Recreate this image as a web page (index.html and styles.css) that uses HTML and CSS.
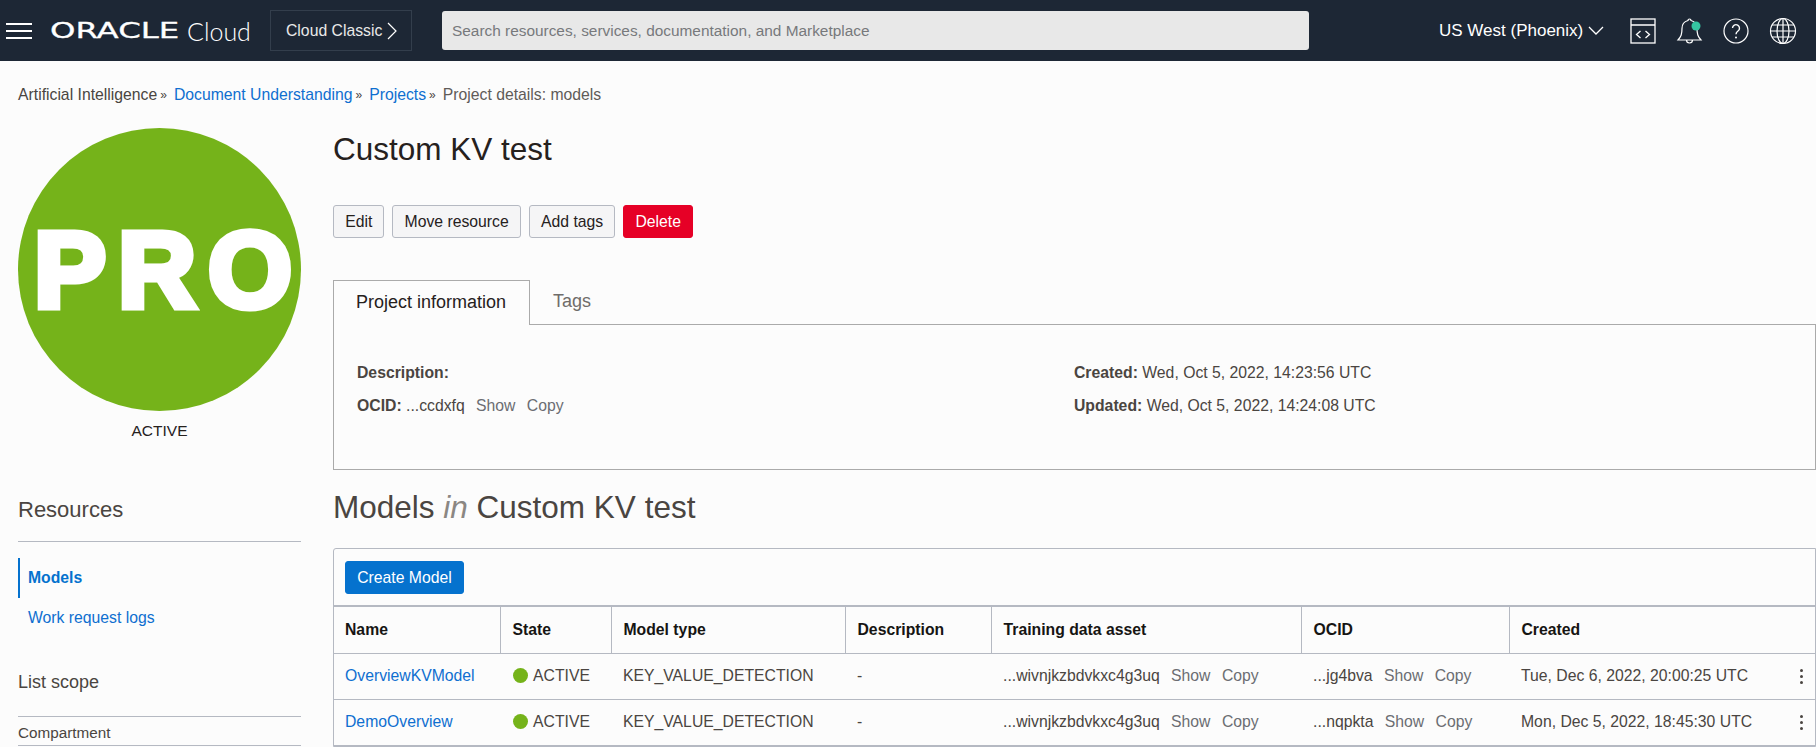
FILE: index.html
```html
<!DOCTYPE html>
<html lang="en">
<head>
    <meta charset="UTF-8">
    <meta name="viewport" content="width=device-width, initial-scale=1.0">
    <title>Project details: models</title>
    <link rel="stylesheet" href="styles.css">
</head>
<body>
    <header class="topbar">
        <svg class="hamburger" width="26" height="16" viewBox="0 0 26 16"><path d="M0 1h26M0 8h26M0 15h26" stroke="#fff" stroke-width="2"/></svg>
        <div class="logo"><span class="logo-oracle">ORACLE</span><span class="logo-cloud">Cloud</span></div>
        <div class="classic">Cloud Classic
            <svg width="10" height="18" viewBox="0 0 10 18"><path d="M1 1l8 8-8 8" fill="none" stroke="#fff" stroke-width="1.2"/></svg>
        </div>
        <div class="search">Search resources, services, documentation, and Marketplace</div>
        <div class="region">US West (Phoenix)
            <svg width="16" height="9" viewBox="0 0 16 9"><path d="M1 1l7 7 7-7" fill="none" stroke="#fff" stroke-width="1.3"/></svg>
        </div>
        <svg class="tool tool-code" width="26" height="26" viewBox="0 0 26 26"><g fill="none" stroke="#fff" stroke-width="1.3"><rect x="1" y="1" width="24" height="24"/><path d="M1 7h24M10.5 13l-4 3.5 4 3.5M15.5 13l4 3.5-4 3.5"/></g></svg>
        <svg class="tool tool-bell" width="28" height="28" viewBox="0 0 28 28"><path d="M12 3.5a1.5 1.5 0 0 1 3 0c4 1 6 4 6 8 0 6 1 8 4 11.5H2c3-3.5 4-5.5 4-11.5 0-4 2-7 6-8zM10.5 23a3 3 0 0 0 6 0" fill="none" stroke="#fff" stroke-width="1.2"/><circle cx="20" cy="9" r="4.5" fill="#35c4a1"/></svg>
        <svg class="tool tool-help" width="26" height="26" viewBox="0 0 26 26"><circle cx="13" cy="13" r="12" fill="none" stroke="#fff" stroke-width="1.2"/><path d="M9.5 10a3.5 3.5 0 1 1 5.5 3c-1.3.9-2 1.6-2 3.2" fill="none" stroke="#fff" stroke-width="1.4"/><circle cx="13" cy="19.5" r="1" fill="#fff"/></svg>
        <svg class="tool tool-globe" width="28" height="28" viewBox="0 0 28 28"><g fill="none" stroke="#fff" stroke-width="1.2"><circle cx="14" cy="14" r="12.5"/><ellipse cx="14" cy="14" rx="6" ry="12.5"/><path d="M14 1.5v25M3 8h22M1.5 14h25M3 20h22"/></g></svg>
    </header>

    <nav class="breadcrumb">
        <span>Artificial Intelligence</span><span class="sep">&raquo;</span>
        <a href="#">Document Understanding</a><span class="sep">&raquo;</span>
        <a href="#">Projects</a><span class="sep">&raquo;</span>
        <span class="current">Project details: models</span>
    </nav>

    <div class="page">
        <aside class="sidebar">
            <div class="badge">PRO</div>
            <div class="badge-state">ACTIVE</div>

            <h3 class="side-title">Resources</h3>
            <ul class="side-nav">
                <li class="selected"><a href="#">Models</a></li>
                <li><a href="#">Work request logs</a></li>
            </ul>

            <h3 class="side-title scope">List scope</h3>
            <div class="scope-label">Compartment</div>
        </aside>

        <main class="content">
            <h1>Custom KV test</h1>
            <div class="actions">
                <button class="btn">Edit</button>
                <button class="btn">Move resource</button>
                <button class="btn">Add tags</button>
                <button class="btn btn-danger">Delete</button>
            </div>

            <div class="tabs">
                <div class="tab active">Project information</div>
                <div class="tab">Tags</div>
            </div>
            <section class="info-panel">
                <div class="info-col">
                    <p><b>Description:</b></p>
                    <p><b>OCID:</b> ...ccdxfq <a class="mini" href="#">Show</a> <a class="mini" href="#">Copy</a></p>
                </div>
                <div class="info-col">
                    <p><b>Created:</b> Wed, Oct 5, 2022, 14:23:56 UTC</p>
                    <p><b>Updated:</b> Wed, Oct 5, 2022, 14:24:08 UTC</p>
                </div>
            </section>

            <h2>Models <i>in</i> Custom KV test</h2>

            <div class="table-box">
                <div class="toolbar"><button class="btn btn-primary">Create Model</button></div>
                <table>
                    <colgroup>
                        <col class="c-name"><col class="c-state"><col class="c-type"><col class="c-desc"><col class="c-asset"><col class="c-ocid"><col>
                    </colgroup>
                    <thead>
                        <tr><th>Name</th><th>State</th><th>Model type</th><th>Description</th><th>Training data asset</th><th>OCID</th><th>Created</th></tr>
                    </thead>
                    <tbody>
                        <tr>
                            <td><a href="#">OverviewKVModel</a></td>
                            <td><span class="dot"></span>ACTIVE</td>
                            <td>KEY_VALUE_DETECTION</td>
                            <td>-</td>
                            <td>...wivnjkzbdvkxc4g3uq <a class="mini" href="#">Show</a> <a class="mini" href="#">Copy</a></td>
                            <td>...jg4bva <a class="mini" href="#">Show</a> <a class="mini" href="#">Copy</a></td>
                            <td class="created">Tue, Dec 6, 2022, 20:00:25 UTC<span class="kebab"><i></i><i></i><i></i></span></td>
                        </tr>
                        <tr>
                            <td><a href="#">DemoOverview</a></td>
                            <td><span class="dot"></span>ACTIVE</td>
                            <td>KEY_VALUE_DETECTION</td>
                            <td>-</td>
                            <td>...wivnjkzbdvkxc4g3uq <a class="mini" href="#">Show</a> <a class="mini" href="#">Copy</a></td>
                            <td>...nqpkta <a class="mini" href="#">Show</a> <a class="mini" href="#">Copy</a></td>
                            <td class="created">Mon, Dec 5, 2022, 18:45:30 UTC<span class="kebab"><i></i><i></i><i></i></span></td>
                        </tr>
                    </tbody>
                </table>
            </div>
        </main>
    </div>
</body>
</html>
```

FILE: styles.css
```css
* {
    box-sizing: border-box;
}
html, body {
    height: 747px;
    overflow: hidden;
}
body {
    margin: 0;
    background: #fcfcfc;
    color: #4a4541;
    font-family: "Liberation Sans", Arial, sans-serif;
    font-size: 15.75px;
}
a {
    color: #0f6fd0;
    text-decoration: none;
}

/* top bar */
.topbar {
    display: flex;
    align-items: center;
    height: 61px;
    padding-left: 6px;
    background: #1d2735;
    color: #fff;
}
.hamburger {
    flex: none;
}
.logo {
    display: flex;
    align-items: center;
    width: 220px;
    margin-left: 18px;
}
.logo-oracle {
    width: 137px;
    font-family: "DejaVu Sans", sans-serif;
    font-size: 22px;
    transform: scaleX(1.47);
    transform-origin: left center;
    -webkit-text-stroke: 0.3px #fff;
}
.logo-cloud {
    font-family: Lato, sans-serif;
    font-size: 25px;
    font-weight: 300;
}
.classic {
    display: flex;
    align-items: center;
    gap: 5px;
    height: 41px;
    width: 142px;
    padding-left: 15px;
    border: 1px solid #333e4c;
    color: #e9e9e9;
    font-size: 15.75px;
}
.search {
    width: 867px;
    height: 39px;
    margin-left: 30px;
    padding-left: 10px;
    border-radius: 3px;
    background: #e8e8e8;
    color: #77797c;
    font-size: 15.4px;
    line-height: 39px;
}
.region {
    display: flex;
    align-items: center;
    gap: 5px;
    margin-left: 130px;
    font-size: 17px;
}
.tool {
    flex: none;
}
.tool-code {
    margin-left: 26px;
}
.tool-bell {
    margin-left: 20px;
}
.tool-help {
    margin-left: 19px;
}
.tool-globe {
    margin-left: 20px;
}

/* breadcrumb */
.breadcrumb {
    display: flex;
    align-items: center;
    height: 41px;
    margin-top: 13px;
    padding-left: 18px;
}
.sep {
    margin: 0 7px 0 3px;
    font-size: 12px;
}
.current {
    color: #5f5b58;
}

/* page columns */
.page {
    display: grid;
    grid-template-columns: 283px 1fr;
    column-gap: 32px;
    padding-left: 18px;
}

/* left column */
.sidebar {
    padding-top: 13px;
}
.badge {
    width: 283px;
    height: 283px;
    padding-left: 16px;
    border-radius: 50%;
    background: #75b31a;
    color: #fff;
    font-size: 108px;
    font-weight: 700;
    letter-spacing: 12px;
    line-height: 283px;
    text-align: center;
    -webkit-text-stroke: 7px #fff;
}
.badge-state {
    margin-top: 11px;
    color: #26211d;
    font-size: 15.5px;
    line-height: 18px;
    text-align: center;
}
.side-title {
    margin: 0;
    font-size: 22px;
    font-weight: 400;
    line-height: 24px;
}
.sidebar > .side-title:first-of-type {
    margin-top: 58px;
    padding-bottom: 19px;
    border-bottom: 1px solid #b5b9c2;
}
.side-nav {
    margin: 16px 0 0;
    padding: 0;
    list-style: none;
}
.side-nav li {
    height: 40px;
    padding-left: 10px;
    line-height: 40px;
}
.side-nav .selected {
    border-left: 2px solid #0572ce;
    padding-left: 8px;
    font-weight: 700;
}
.side-nav .selected a {
    color: #0572ce;
}
.sidebar > .side-title.scope {
    margin-top: 32px;
    padding-bottom: 0;
    border-bottom: 0;
    font-size: 18px;
}
.scope-label {
    margin-top: 22px;
    padding-top: 7px;
    height: 30px;
    border-top: 1px solid #b5b9c2;
    border-bottom: 1px solid #b5b9c2;
    font-size: 15.25px;
}

/* right column */
.content {
    min-width: 0;
}
h1 {
    margin: 0;
    padding-top: 14px;
    color: #26211d;
    font-size: 31.5px;
    font-weight: 400;
    line-height: 40px;
}
.actions {
    display: flex;
    gap: 8px;
    margin-top: 36px;
}
.btn {
    height: 33px;
    padding: 0 11.15px;
    border: 1px solid #b5b9c2;
    border-radius: 3px;
    background: #f5f5f6;
    color: #26211d;
    font-family: inherit;
    font-size: 15.75px;
}
.btn-danger {
    border-color: #e60026;
    background: #e60026;
    color: #fff;
}
.btn-primary {
    border-color: #0572ce;
    background: #0572ce;
    color: #fff;
}
.tabs {
    display: flex;
    margin-top: 42px;
}
.tab {
    height: 45px;
    padding: 0 23px;
    color: #6f6c6a;
    font-size: 18px;
    line-height: 42px;
    border-bottom: 1px solid #aaa;
}
.tab:last-child {
    flex: 1;
}
.tab.active {
    border: 1px solid #aaa;
    border-bottom: 0;
    padding: 0 22px;
    width: 197px;
    color: #26211d;
}
.info-panel {
    display: grid;
    grid-template-columns: 717px 1fr;
    height: 145px;
    padding: 31px 23px 0;
    border: 1px solid #aaa;
    border-top: 0;
}
.info-panel p {
    margin: 0;
    line-height: 33px;
}
.mini {
    margin-left: 7px;
    color: #6b6d72;
}
h2 {
    margin: 17px 0 0;
    color: #4a4541;
    font-size: 31.5px;
    font-weight: 400;
    line-height: 40px;
}
h2 i {
    color: #8b8783;
}
.table-box {
    margin-top: 21px;
    border: 1px solid #b5b9c2;
    border-radius: 3px 0 0 0;
}
.toolbar {
    height: 58px;
    padding: 12px 11px;
    border-bottom: 2px solid #b5b9c2;
}
table {
    width: 100%;
    border-collapse: collapse;
    table-layout: fixed;
}
.c-name { width: 166px; }
.c-state { width: 111px; }
.c-type { width: 234px; }
.c-desc { width: 146px; }
.c-asset { width: 310px; }
.c-ocid { width: 208px; }
th, td {
    height: 46px;
    padding: 0 0 0 12px;
    border-bottom: 1px solid #b5b9c2;
    font-size: 15.75px;
    text-align: left;
    white-space: nowrap;
}
th:first-child, td:first-child {
    padding-left: 11px;
}
th {
    border-right: 1px solid #b5b9c2;
    color: #161513;
    font-weight: 700;
}
th:last-child {
    border-right: 0;
}
.dot {
    display: inline-block;
    width: 15px;
    height: 15px;
    margin: 0 5px 0 1px;
    border-radius: 50%;
    background: #75b31a;
    vertical-align: -2px;
}
.created {
    position: relative;
}
.kebab {
    position: absolute;
    right: 12px;
    top: 15px;
    display: flex;
    flex-direction: column;
    gap: 3px;
}
.kebab i {
    width: 3px;
    height: 3px;
    border-radius: 50%;
    background: #4a4541;
}
```
